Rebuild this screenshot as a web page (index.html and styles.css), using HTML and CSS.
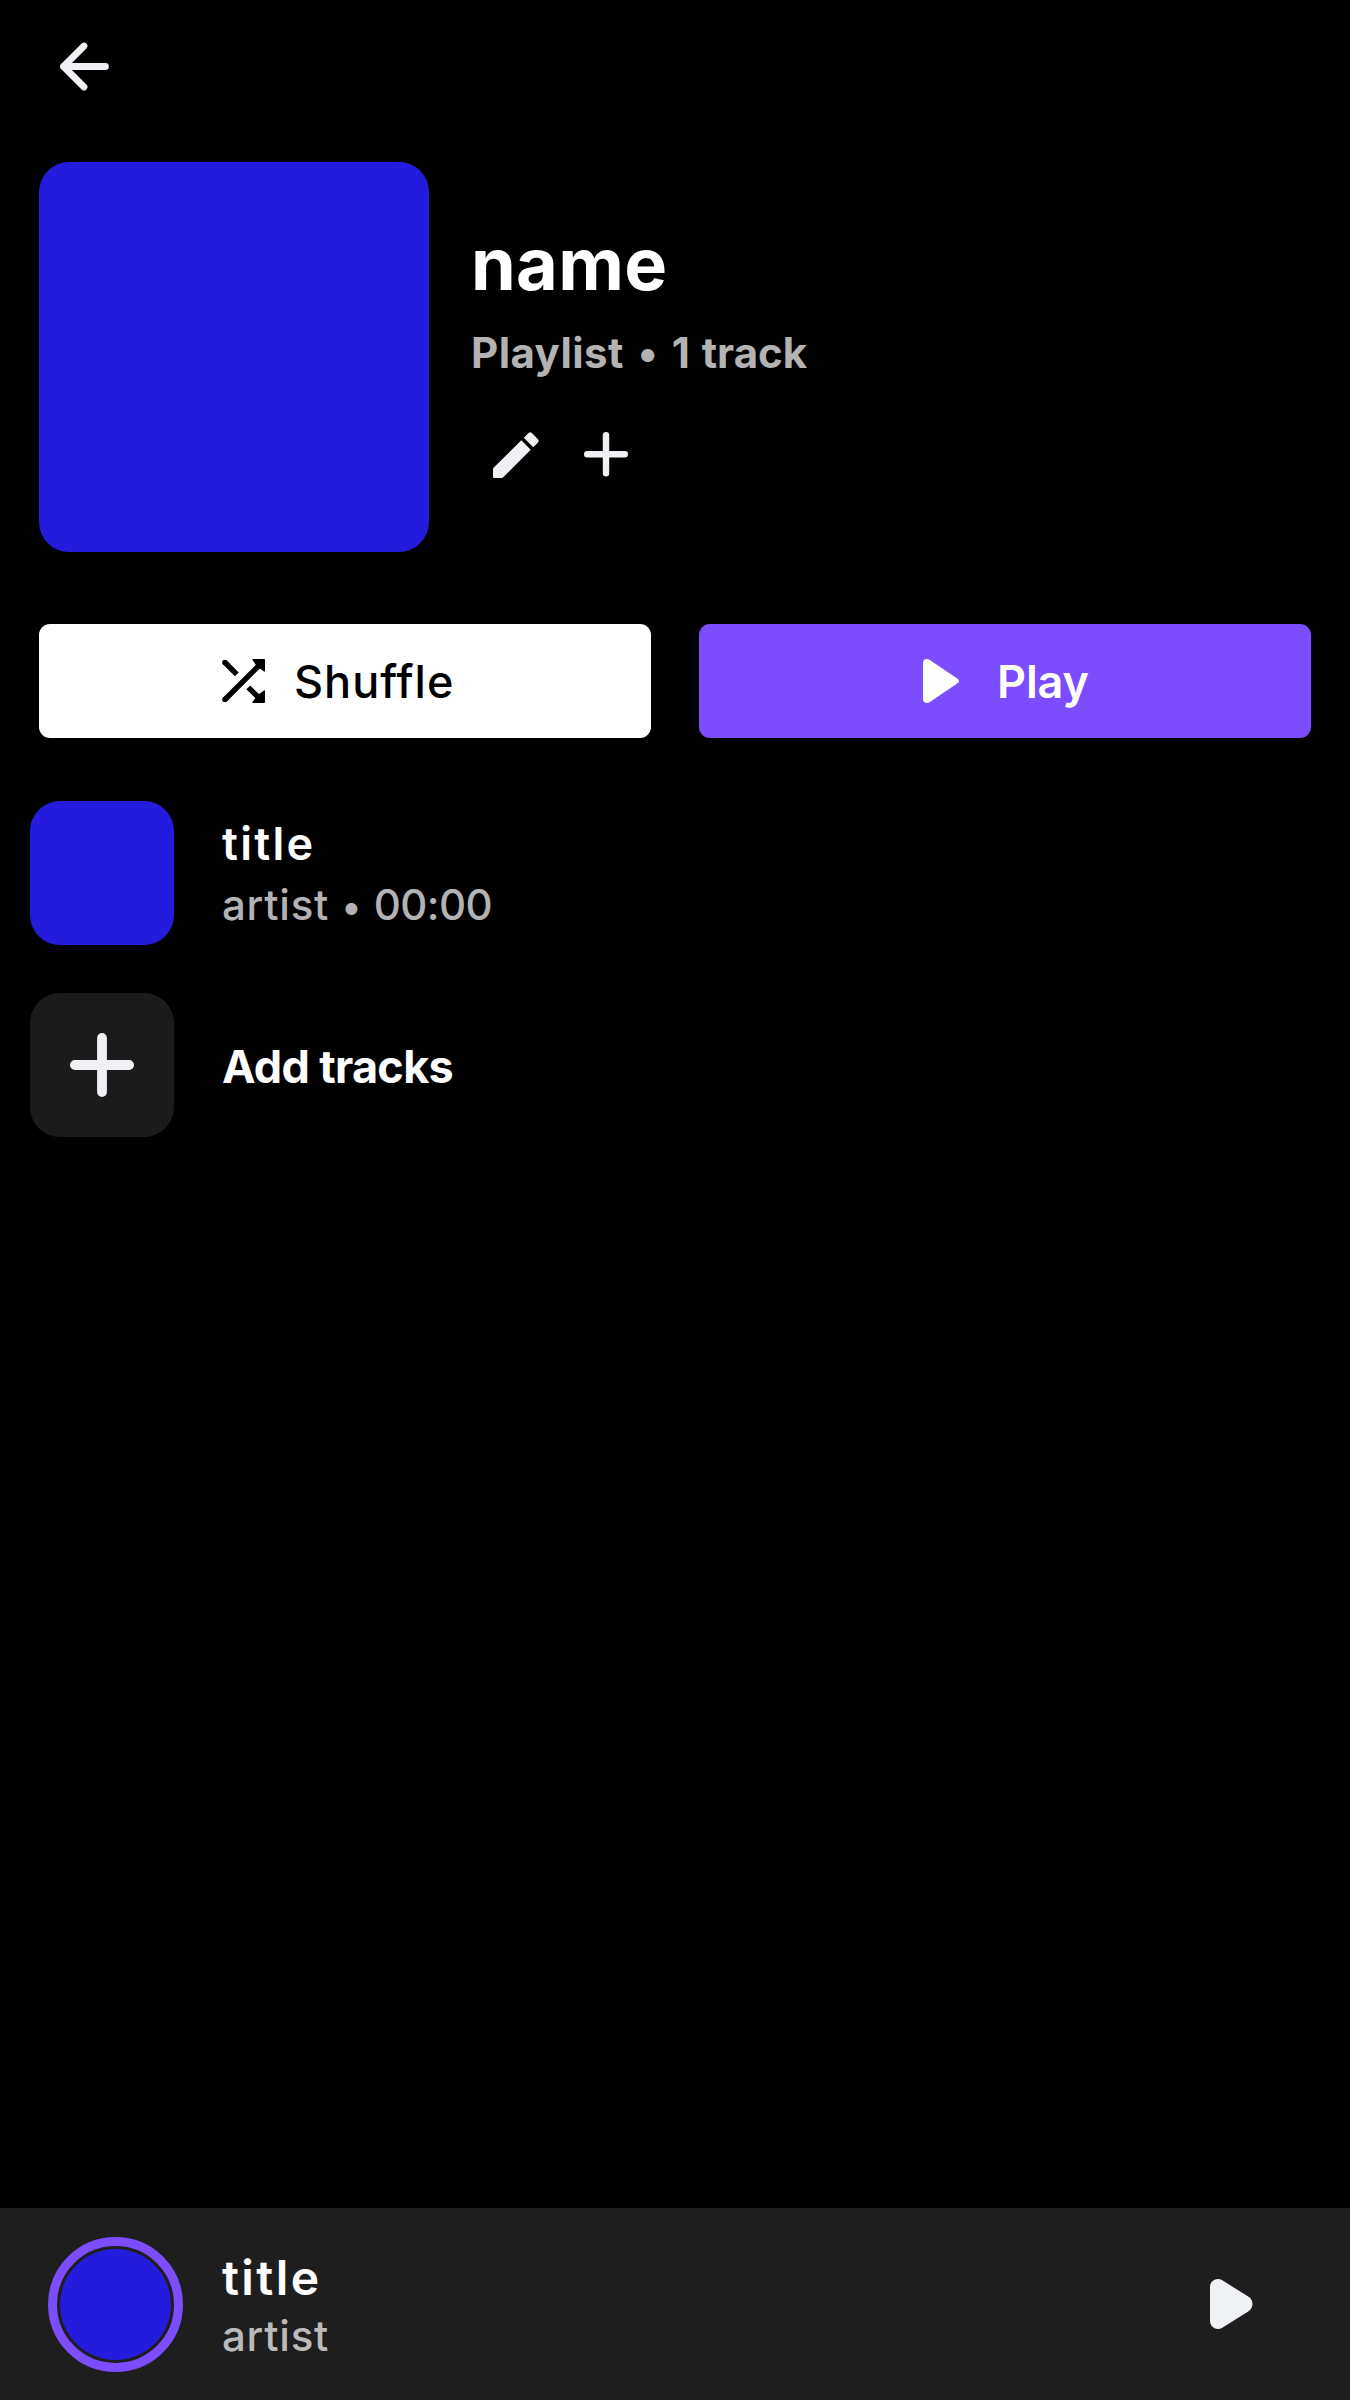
FILE: index.html
```html
<!DOCTYPE html>
<html lang="en">
<head>
<meta charset="utf-8">
<title>Playlist</title>
<link rel="stylesheet" href="styles.css">
</head>
<body>
<div class="screen">
  <header class="topbar">
    <svg class="icon" width="50" height="50" viewBox="0 0 50 50"><path d="M24 4 3.5 24.500 24 45M3.500 24.500H45.500" fill="none" stroke="currentColor" stroke-width="6.800" stroke-linecap="round" stroke-linejoin="round"/></svg>
  </header>

  <section class="hero">
    <div class="cover"></div>
    <div class="info">
      <h1 class="name">name</h1>
      <p class="meta"><span class="kind">Playlist</span> <span class="dot">•</span> <span class="count">1 track</span></p>
      <div class="actions">
        <svg class="icon" width="46" height="46" viewBox="0 0 46 46" fill="currentColor"><path d="M28.300 8.300 37.700 17.700 10.500 45Q9.600 46 8.500 46H1Q0 46 0 45V37.500Q0 36.400.8 35.600zM30.800 5.800 35.300 1.200Q37.200-.6 39.100 1.200L44.800 6.900Q46.600 8.800 44.800 10.700L40.200 15.200z"/></svg>
        <svg class="icon" width="44" height="45" viewBox="0 0 44 45"><path d="M22 3.300V41.300M3.200 22.300H40.800" stroke="currentColor" stroke-width="6.400" stroke-linecap="round"/></svg>
      </div>
    </div>
  </section>

  <div class="buttons">
    <button class="button shuffle">
      <svg width="44" height="44" viewBox="0 0 44 44"><path d="M3 3.500 14.800 15.300M3 40.500 37 6.500M26.300 28.300 37 39" fill="none" stroke="currentColor" stroke-width="5.400"/><circle cx="2.900" cy="3.500" r="2.700"/><circle cx="2.900" cy="40.400" r="2.700"/><path d="M31.500 0H42Q43 0 43 1V11.500Q43 13.500 41.400 12L37 9 34 6 30.800 1.600Q29.500 0 31.500 0zM43 32.500V43Q43 44 42 44H31.500Q29.500 44 30.800 42.400L34 38 37 35 41.400 32Q43 30.500 43 32.500z"/></svg>
      <span>Shuffle</span>
    </button>
    <button class="button play">
      <svg width="36" height="44" viewBox="0 0 36 44" fill="currentColor"><path d="M0 4Q0 0 4 0Q5.300 0 6.500.8L34.200 19.400Q37.800 22 34.200 24.600L6.500 43.200Q5.300 44 4 44Q0 44 0 40z"/></svg>
      <span>Play</span>
    </button>
  </div>

  <main class="tracks">
    <div class="track">
      <div class="thumb art"></div>
      <div class="text">
        <div class="title">title</div>
        <div class="sub"><span class="artist">artist</span> <span class="dot">•</span> <span class="time">00:00</span></div>
      </div>
    </div>
    <div class="track">
      <div class="thumb add"><svg class="icon" width="64" height="64" viewBox="0 0 64 64"><path d="M32 4.900V59.100M4.900 32H59.100" stroke="currentColor" stroke-width="9.800" stroke-linecap="round"/></svg></div>
      <div class="addlabel">Add tracks</div>
    </div>
  </main>

  <footer class="player">
    <div class="ring"><div class="disc"></div></div>
    <div class="text">
      <div class="title">title</div>
      <div class="sub"><span class="artist">artist</span></div>
    </div>
    <svg class="icon" width="43" height="50" viewBox="0 0 43 50" fill="currentColor"><path d="M0 8A8 8 0 0 1 12.300 1.300L38.600 17.800A8.600 8.600 0 0 1 38.600 32.200L12.300 48.700A8 8 0 0 1 0 42z"/></svg>
  </footer>
</div>
</body>
</html>
```

FILE: styles.css
```css
* { box-sizing: border-box; margin: 0; padding: 0; }

body {
  background: #000;
  color: #fff;
  font-family: Inter, "Noto Sans", sans-serif;
}

svg { display: block; flex: none; overflow: visible; }
.icon { color: #f0f1f4; }

.screen {
  display: flex;
  flex-direction: column;
  height: 2400px;
}

.topbar { height: 162px; padding: 42px 60px; }

.hero { display: flex; gap: 42px; padding-left: 39px; height: 390px; }
.cover { width: 390px; height: 390px; border-radius: 30px; background: #241bdc; }
.info { padding-top: 60px; }
.name { font-size: 72px; font-weight: 700; line-height: 84px; letter-spacing: 0.3px; }
.meta {
  margin-top: 19px;
  font-size: 42px;
  font-weight: 700;
  line-height: 56px;
  color: #b3b3b3;
  white-space: nowrap;
}
.meta .kind { letter-spacing: 0.44px; }
.meta .dot { margin: 0 4px; }
.meta .count { word-spacing: 2px; }
.actions { display: flex; gap: 45px; margin-top: 51px; padding-left: 22px; }

.buttons {
  display: grid;
  grid-template-columns: 612px 612px;
  gap: 48px;
  padding: 72px 39px 0;
}
.button {
  display: flex;
  align-items: center;
  height: 114px;
  border: 0;
  border-radius: 11px;
  font: 600 45px/60px Inter, "Noto Sans", sans-serif;
}
.button span { padding-top: 2px; }
.shuffle { background: #fff; color: #000; padding-left: 183px; gap: 28px; font-weight: 500; letter-spacing: 1px; }
.play { background: #7c4dff; color: #fff; padding-left: 224px; gap: 38px; letter-spacing: -0.1px; }

.tracks {
  display: flex;
  flex: 1;
  flex-direction: column;
  gap: 48px;
  padding: 63px 30px 0;
}
.track { display: flex; gap: 48px; height: 144px; }
.thumb { width: 144px; height: 144px; border-radius: 30px; }
.art { background: #241bdc; }
.add { display: flex; align-items: center; justify-content: center; background: #1b1b1b; }
.title { font-size: 45px; font-weight: 600; line-height: 60px; letter-spacing: 2.3px; }
.sub { font-size: 42px; font-weight: 500; line-height: 62px; color: #b3b3b3; }
.artist { letter-spacing: 0.74px; }
.sub .dot { margin: 0 1px; font-size: 38px; }
.time { letter-spacing: -0.6px; }
.track .text { padding-top: 13px; }
.addlabel { padding-top: 44px; font-size: 45px; font-weight: 700; line-height: 60px; letter-spacing: -0.7px; }

.player {
  display: flex;
  align-items: center;
  height: 192px;
  padding: 0 97px 0 48px;
  background: #1e1e1e;
}
.ring { width: 135px; height: 135px; padding: 3px; border: 9px solid #7c4dff; border-radius: 50%; }
.disc { width: 111px; height: 111px; border-radius: 50%; background: #241bdc; }
.player .text { flex: 1; height: 192px; padding: 40px 0 0 39px; }
.player .title { font-size: 48px; letter-spacing: 2.4px; }
.player .sub { line-height: 56px; color: #bababa; }
```
